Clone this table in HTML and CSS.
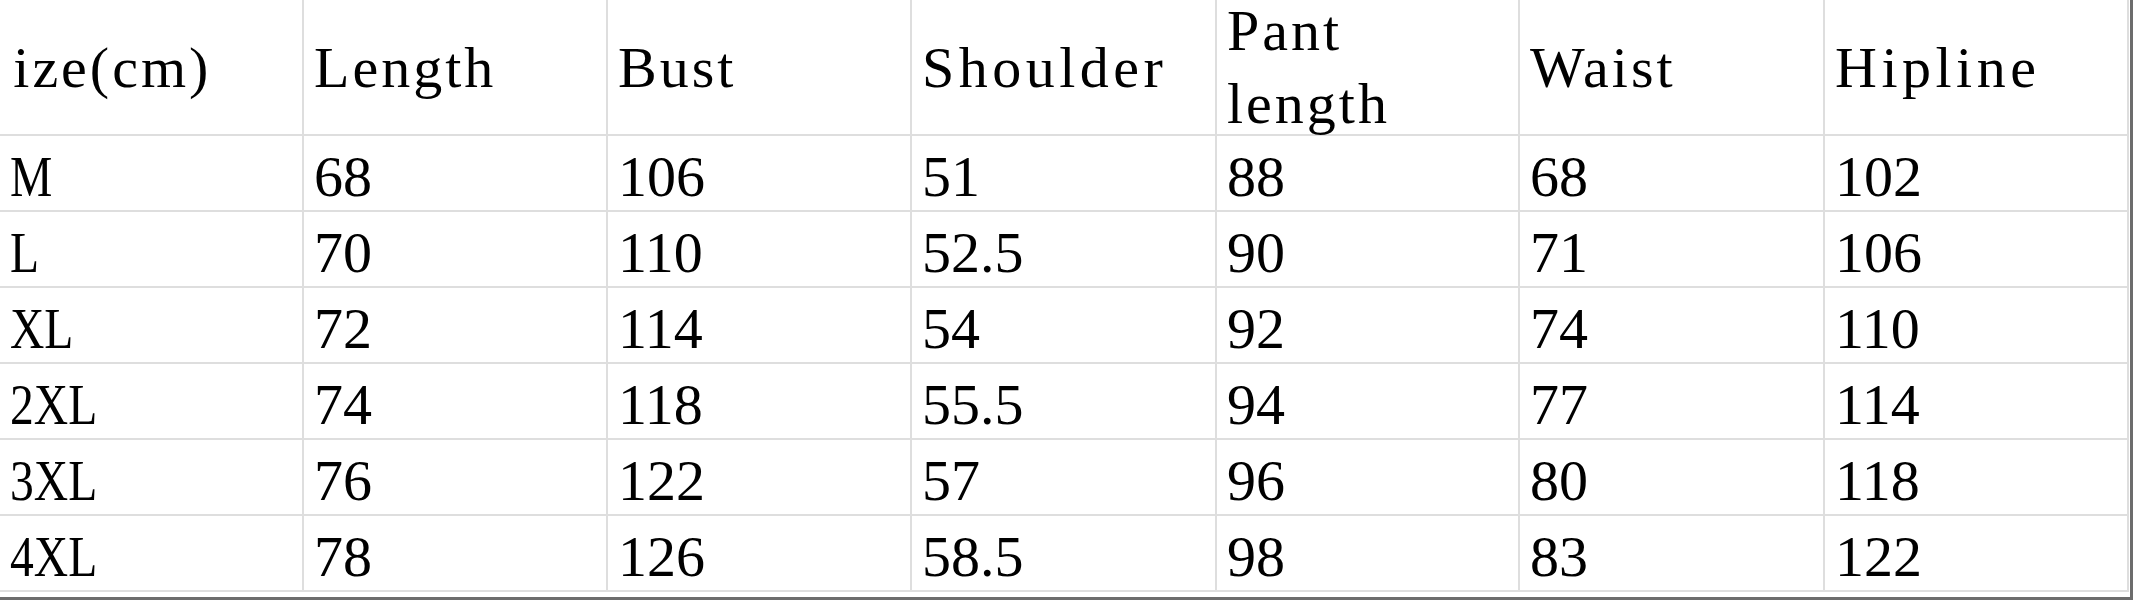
FILE: index.html
```html
<!DOCTYPE html>
<html>
<head>
<meta charset="utf-8">
<link rel="stylesheet" href="styles.css">
</head>
<body>
<div class="frame">
  <div class="sheet">
    <div class="cell head first"><span class="clip-s"><span class="cut">S</span>ize(cm)</span></div>
    <div class="cell head">Length</div>
    <div class="cell head">Bust</div>
    <div class="cell head wide">Shoulder</div>
    <div class="cell head">Pant<br>length</div>
    <div class="cell head">Waist</div>
    <div class="cell head wide">Hipline</div>

    <div class="cell"><span class="size">M</span></div>
    <div class="cell">68</div><div class="cell">106</div><div class="cell">51</div><div class="cell">88</div><div class="cell">68</div><div class="cell">102</div>

    <div class="cell"><span class="size">L</span></div>
    <div class="cell">70</div><div class="cell">110</div><div class="cell">52.5</div><div class="cell">90</div><div class="cell">71</div><div class="cell">106</div>

    <div class="cell"><span class="size">XL</span></div>
    <div class="cell">72</div><div class="cell">114</div><div class="cell">54</div><div class="cell">92</div><div class="cell">74</div><div class="cell">110</div>

    <div class="cell"><span class="size">2XL</span></div>
    <div class="cell">74</div><div class="cell">118</div><div class="cell">55.5</div><div class="cell">94</div><div class="cell">77</div><div class="cell">114</div>

    <div class="cell"><span class="size">3XL</span></div>
    <div class="cell">76</div><div class="cell">122</div><div class="cell">57</div><div class="cell">96</div><div class="cell">80</div><div class="cell">118</div>

    <div class="cell"><span class="size">4XL</span></div>
    <div class="cell">78</div><div class="cell">126</div><div class="cell">58.5</div><div class="cell">98</div><div class="cell">83</div><div class="cell">122</div>
  </div>
</div>
</body>
</html>
```

FILE: styles.css
```css
html, body {
  margin: 0;
  padding: 0;
  background: #ffffff;
}

.frame {
  width: 2133px;
  height: 600px;
  box-sizing: border-box;
  border-right: 3px solid #6c6c6c;
  border-bottom: 3px solid #6c6c6c;
  padding-bottom: 5px;
  overflow: hidden;
}

.sheet {
  display: grid;
  grid-template-columns: 304px 304px 304px 305px 303px 305px 304px;
  grid-template-rows: 136px repeat(6, 76px);
  font-family: "Liberation Serif", "Times New Roman", serif;
  font-size: 58px;
  color: #000000;
}

.cell {
  box-sizing: border-box;
  border-right: 2px solid #dedede;
  border-bottom: 2px solid #dedede;
  padding: 8px 0 0 10px;
  line-height: 66px;
  white-space: nowrap;
  overflow: hidden;
}

.cell.head {
  display: flex;
  align-items: center;
  padding: 0 0 0 10px;
  line-height: 73px;
  letter-spacing: 3px;
  overflow: visible;
}

.cell.head.wide {
  letter-spacing: 4.5px;
}

.cell.head.first {
  overflow: hidden;
}

.clip-s {
  display: inline-block;
  margin-left: -45px;
}

.cut {
  letter-spacing: 16px;
}

.size {
  display: inline-block;
  transform: scaleX(0.82);
  transform-origin: left center;
}
```
